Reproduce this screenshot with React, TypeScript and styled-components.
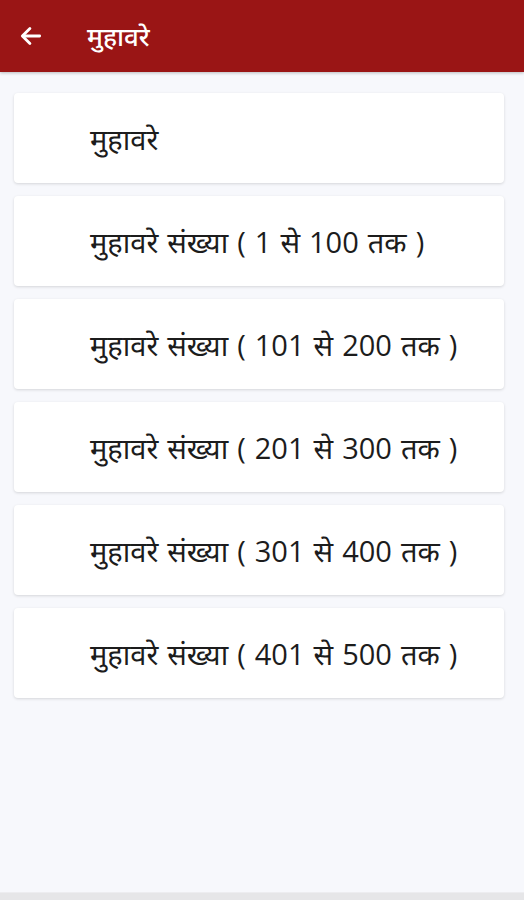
import React from "react";
import styled, { createGlobalStyle } from "styled-components";

const Global = createGlobalStyle`
  html, body { margin: 0; padding: 0; background: #f7f8fc; }
  body { font-family: "Open Sans", "Noto Sans", sans-serif; }
`;

const Page = styled.div`
  width: 524px;
  height: 900px;
  display: flex;
  flex-direction: column;
  background: #f7f8fc;
  overflow: hidden;
`;

const Header = styled.header`
  height: 72px;
  flex-shrink: 0;
  background: #9a1515;
  display: flex;
  align-items: center;
  padding: 0 0 0 16px;
  box-sizing: border-box;
  box-shadow: 0 1px 3px rgba(0,0,0,0.25);
`;

const BackButton = styled.button`
  width: 30px;
  height: 30px;
  border: none;
  background: transparent;
  padding: 0;
  display: flex;
  align-items: center;
  justify-content: center;
  color: #fff;
`;

const Title = styled.h1`
  margin: 0 0 0 41px;
  font-size: 26px;
  font-weight: 500;
  color: #fff;
`;

const List = styled.main`
  flex: 1;
  display: flex;
  flex-direction: column;
  gap: 13px;
  padding: 21px 20px 0 14px;
`;

const Card = styled.div`
  height: 90px;
  background: #fff;
  border-radius: 4px;
  box-shadow: 0 1px 3px rgba(0,0,0,0.14);
  display: flex;
  align-items: center;
  padding-left: 76px;
  box-sizing: border-box;
  font-size: 29px;
  font-weight: 400;
  word-spacing: 1.5px;
  color: #1c1c1c;
`;

const BottomBar = styled.div`
  height: 7px;
  flex-shrink: 0;
  background: #e6e6e8;
  border-top: 1px solid #ededf0;
`;

const items = [
  "मुहावरे",
  "मुहावरे संख्या ( 1 से 100 तक )",
  "मुहावरे संख्या ( 101 से 200 तक )",
  "मुहावरे संख्या ( 201 से 300 तक )",
  "मुहावरे संख्या ( 301 से 400 तक )",
  "मुहावरे संख्या ( 401 से 500 तक )",
];

export default function App() {
  return (
    <Page>
      <Global />
      <Header>
        <BackButton aria-label="back">
          <svg width="26" height="26" viewBox="0 0 24 24" fill="none" stroke="#fff" strokeWidth="2.6" strokeLinecap="round" strokeLinejoin="round">
            <path d="M20 12H5" />
            <path d="M11 5l-7 7 7 7" />
          </svg>
        </BackButton>
        <Title>मुहावरे</Title>
      </Header>
      <List>
        {items.map((t) => (
          <Card key={t}>{t}</Card>
        ))}
      </List>
      <BottomBar />
    </Page>
  );
}
